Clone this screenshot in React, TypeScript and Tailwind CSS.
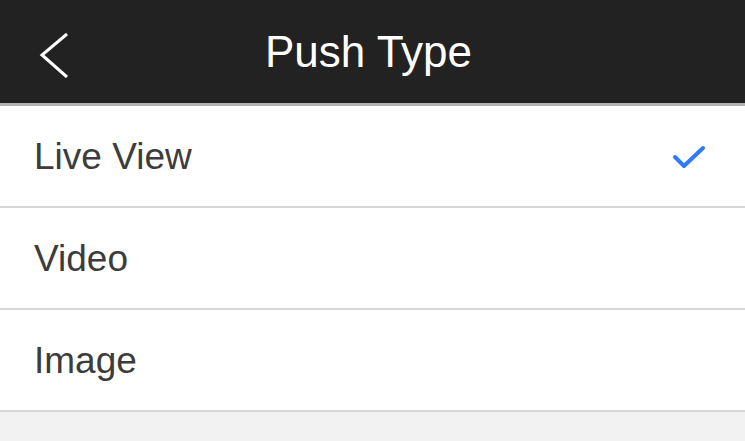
const options = ['Live View', 'Video', 'Image'];

export default function App() {
  const selected = 'Live View';

  return (
    <div className="w-[745px] h-[441px] bg-[#f2f2f2] overflow-hidden font-['Liberation_Sans',Arial,sans-serif]">
      {/* Nav bar */}
      <div className="relative h-[106px] bg-[#222222] border-b-[3px] border-[#b3b3b3] flex items-center justify-center">
        <button className="absolute left-[36px] top-[29px] w-[40px] h-[52px] flex items-center justify-center">
          <svg width="40" height="52" viewBox="0 0 40 52" fill="none">
            <path d="M31 5 L6 26 L31 48" stroke="white" strokeWidth="3" strokeLinecap="butt" strokeLinejoin="miter" />
          </svg>
        </button>
        <h1 className="text-white text-[44px] leading-none -ml-[8px]">Push Type</h1>
      </div>

      {/* Option list */}
      <div className="bg-white">
        {options.map((opt) => (
          <div
            key={opt}
            className="h-[102px] border-b-[2px] border-[#d6d6d6] flex items-center justify-between pl-[34px] pr-[39px]"
          >
            <span className="text-[37px] text-[#3c3c3c] leading-none">{opt}</span>
            {opt === selected && (
              <svg width="34" height="26" viewBox="0 0 34 26" fill="none" className="mt-[4px]">
                <path d="M3 12 L12 21 L31 3" stroke="#2f7bf5" strokeWidth="4" strokeLinecap="round" strokeLinejoin="round" />
              </svg>
            )}
          </div>
        ))}
      </div>
    </div>
  );
}
